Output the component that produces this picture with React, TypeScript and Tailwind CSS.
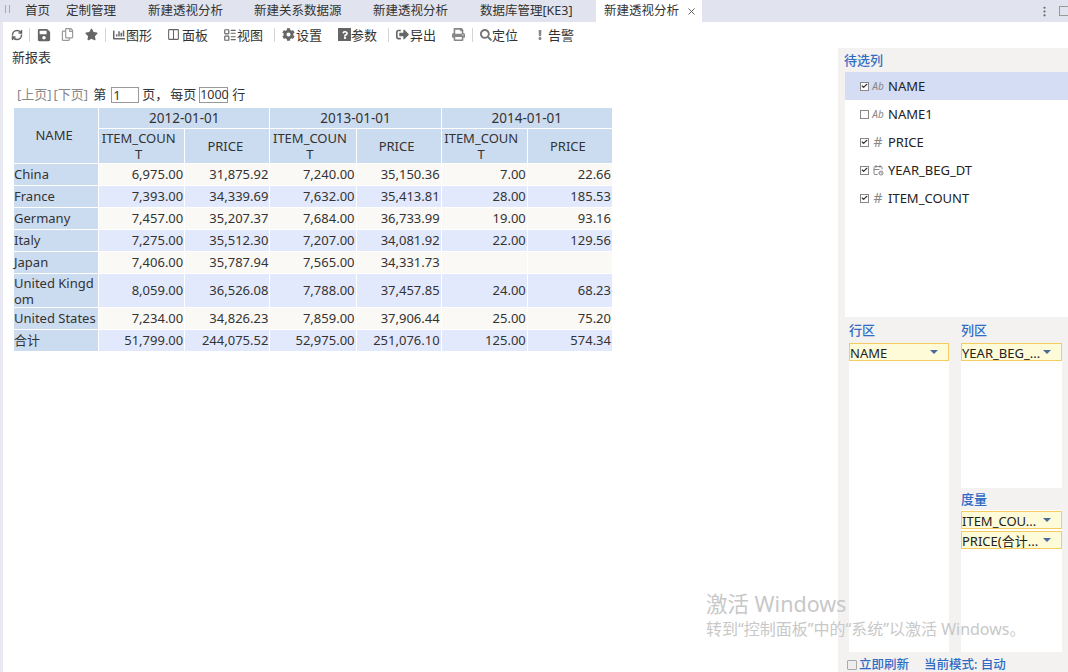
import type { FC, ReactNode } from 'react';
import { FaSave, FaStar, FaCog, FaPrint, FaSearch, FaExclamation, FaRegCopy, FaQuestion, FaChartBar, FaSignOutAlt } from 'react-icons/fa';
import { TbColumns2, TbCalendarClock } from 'react-icons/tb';
import { RefreshCw, X, Check, LayoutList, EllipsisVertical } from 'lucide-react';

const FONT = "font-['Noto_Sans','Noto_Sans_CJK_SC',sans-serif]";

const tabs = [
  { label: '首页', cls: 'ml-[25px] w-[41px]' },
  { label: '定制管理', cls: 'w-[82px]' },
  { label: '新建透视分析', cls: 'w-[106px]' },
  { label: '新建关系数据源', cls: 'w-[119px]' },
  { label: '新建透视分析', cls: 'w-[107px]' },
  { label: '数据库管理[KE3]', cls: 'w-[116px]' },
];

type Row = { name: ReactNode; vals: string[]; tall?: boolean };

const rows: Row[] = [
  { name: 'China', vals: ['6,975.00', '31,875.92', '7,240.00', '35,150.36', '7.00', '22.66'] },
  { name: 'France', vals: ['7,393.00', '34,339.69', '7,632.00', '35,413.81', '28.00', '185.53'] },
  { name: 'Germany', vals: ['7,457.00', '35,207.37', '7,684.00', '36,733.99', '19.00', '93.16'] },
  { name: 'Italy', vals: ['7,275.00', '35,512.30', '7,207.00', '34,081.92', '22.00', '129.56'] },
  { name: 'Japan', vals: ['7,406.00', '35,787.94', '7,565.00', '34,331.73', '', ''] },
  { name: <span className="block leading-[16px]">United Kingd<br />om</span>, vals: ['8,059.00', '36,526.08', '7,788.00', '37,457.85', '24.00', '68.23'], tall: true },
  { name: 'United States', vals: ['7,234.00', '34,826.23', '7,859.00', '37,906.44', '25.00', '75.20'] },
  { name: '合计', vals: ['51,799.00', '244,075.52', '52,975.00', '251,076.10', '125.00', '574.34'] },
];

const ToolItem: FC<{ icon: ReactNode; label?: string; cls?: string }> = ({ icon, label, cls }) => (
  <div className={`flex items-center shrink-0 ${cls ?? ''}`}>
    {icon}
    {label && <span className="text-[13px] leading-none text-[#333] mt-[2px]">{label}</span>}
  </div>
);

const Sep = ({ cls }: { cls: string }) => <div className={`w-px h-[14px] bg-[#d4d4d4] shrink-0 ${cls}`} />;

const FieldRow: FC<{ label: string; checked?: boolean; active?: boolean; icon: ReactNode }> = ({ label, checked = true, active, icon }) => (
  <div className={`h-[28px] flex items-center pl-[15px] ${active ? 'bg-[#d4ddf4]' : ''}`}>
    <span className="w-[9px] h-[9px] border border-[#888] bg-white flex items-center justify-center shrink-0">
      {checked && <Check size={8} strokeWidth={4} className="text-[#333]" />}
    </span>
    <span className="w-[18px] flex justify-center text-[#888] shrink-0">{icon}</span>
    <span className="ml-[1px] mt-[1px] text-[13px] text-[#222]">{label}</span>
  </div>
);

const Pill: FC<{ label: string; cls?: string }> = ({ label, cls }) => (
  <div className={`h-[18px] flex items-center justify-between bg-[#fefbd8] border border-[#f5cc5e] text-[13px] leading-none text-[#222] ${cls ?? ''}`}>
    <span className="whitespace-nowrap pt-[2px]">{label}</span>
    <span className="w-0 h-0 border-x-[4px] border-x-transparent border-t-[4px] border-t-[#4a6a9a] mr-[10px]" />
  </div>
);

const Ab = () => <span className="text-[10px] italic leading-none">Ab</span>;
const Hash = () => <span className="text-[14px] leading-none">#</span>;

const App: FC = () => {
  return (
    <div className={`relative w-[1068px] h-[672px] overflow-hidden bg-white flex flex-col ${FONT}`}>
      {/* Tabs */}
      <div className="h-[22px] bg-[#e1e3ee] flex items-center shrink-0 text-[12.5px] text-[#333]">
        <div className="absolute left-[5px] top-[5px] w-[5px] h-[8px] border-x border-[#aaa]" />
        {tabs.map((t, i) => (
          <div key={i} className={`shrink-0 leading-none whitespace-nowrap ${t.cls}`}>{t.label}</div>
        ))}
        <div className="w-[106px] h-full bg-white flex items-center pl-[8px] shrink-0 whitespace-nowrap">
          新建透视分析
          <X size={11} className="ml-[7px] text-[#555]" />
        </div>
        <EllipsisVertical size={13} className="ml-[336px] text-[#666] shrink-0" />
        <div className="ml-[8px] w-[10px] h-[10px] border border-[#999] shrink-0" />
      </div>

      {/* Toolbar */}
      <div className="h-[24px] pt-[1px] flex items-center shrink-0 border-l-[3px] border-[#e9e9f3] text-[#666]">
        <ToolItem cls="ml-[8px]" icon={<RefreshCw size={12} strokeWidth={3} />} />
        <Sep cls="ml-[6px]" />
        <ToolItem cls="ml-[7px]" icon={<FaSave size={14} />} />
        <ToolItem cls="ml-[10px]" icon={<FaRegCopy size={13} className="text-[#999]" />} />
        <ToolItem cls="ml-[11px]" icon={<FaStar size={13} />} />
        <Sep cls="ml-[7px]" />
        <ToolItem cls="ml-[7px]" icon={<FaChartBar size={12} className="mr-[1px]" />} label="图形" />
        <ToolItem cls="ml-[15px]" icon={<TbColumns2 size={13} className="mr-[2px]" />} label="面板" />
        <ToolItem cls="ml-[15px]" icon={<LayoutList size={14} />} label="视图" />
        <Sep cls="ml-[11px]" />
        <ToolItem cls="ml-[7px]" icon={<FaCog size={13} className="mr-[1px]" />} label="设置" />
        <ToolItem cls="ml-[16px]" icon={<span className="w-[13px] h-[13px] bg-[#666] flex items-center justify-center"><FaQuestion size={8} className="text-white" /></span>} label="参数" />
        <Sep cls="ml-[11px]" />
        <ToolItem cls="ml-[7px]" icon={<FaSignOutAlt size={13} className="mr-[1px]" />} label="异出" />
        <ToolItem cls="ml-[16px]" icon={<FaPrint size={13} className="text-[#888]" />} />
        <Sep cls="ml-[7px]" />
        <ToolItem cls="ml-[7px]" icon={<FaSearch size={12} className="text-[#777]" />} label="定位" />
        <ToolItem cls="ml-[17px]" icon={<FaExclamation size={10} className="mr-[3px] text-[#888]" />} label="告警" />
      </div>

      <div className="flex flex-1 min-h-0">
        {/* Report */}
        <div className="flex-1 border-l-[3px] border-[#e9e9f3] pl-[9px]">
          <div className="mt-[2px] h-[18px] text-[13px] leading-[18px] text-[#333]">新报表</div>
          <div className="mt-[20px] ml-[5px] h-[18px] flex items-center text-[13px] text-[#333] whitespace-nowrap">
            <span className="text-[#888]">[上页]</span>
            <span className="ml-[2px] text-[#888]">[下页]</span>
            <span className="ml-[5px]">第</span>
            <span className="ml-[5px] w-[28px] h-[16px] border border-[#999] pl-[1px] leading-[14px]">1</span>
            <span className="ml-[3px]">页，</span>
            <span className="ml-[2px]">每页</span>
            <span className="ml-[3px] w-[29px] h-[16px] border border-[#999] leading-[14px] text-[12.5px]">1000</span>
            <span className="ml-[4px]">行</span>
          </div>
          <table className="mt-[3px] ml-[1px] border-separate border-spacing-[1px] table-fixed w-[600px] text-[13px] leading-[17px] text-[#333]">
            <colgroup>
              <col className="w-[84px]" />
              <col className="w-[85px]" />
              <col className="w-[84px]" />
              <col className="w-[85px]" />
              <col className="w-[84px]" />
              <col className="w-[85px]" />
              <col className="w-[84px]" />
            </colgroup>
            <thead>
              <tr className="h-[20px]">
                <th rowSpan={2} className="bg-[#ccdcf0] font-normal align-middle pr-[4px]">NAME</th>
                {['2012-01-01', '2013-01-01', '2014-01-01'].map((d) => (
                  <th key={d} colSpan={2} className="bg-[#ccdcf0] font-normal text-[13.5px]">{d}</th>
                ))}
              </tr>
              <tr className="h-[34px]">
                {[0, 1, 2].map((i) => [
                  <th key={`c${i}`} className="bg-[#ccdcf0] font-normal break-all leading-[16px] pr-[6px]">ITEM_COUN T</th>,
                  <th key={`p${i}`} className="bg-[#ccdcf0] font-normal pr-[4px]">PRICE</th>,
                ])}
              </tr>
            </thead>
            <tbody>
              {rows.map((r, i) => (
                <tr key={i} className={r.tall ? 'h-[33px]' : 'h-[21px]'}>
                  <td className="bg-[#ccdcf0] p-0 whitespace-nowrap">{r.name}</td>
                  {r.vals.map((v, j) => (
                    <td key={j} className={`text-right p-0 pr-[1px] ${i % 2 ? 'bg-[#e3e9fc]' : 'bg-[#fbf9f5]'}`}>{v}</td>
                  ))}
                </tr>
              ))}
            </tbody>
          </table>
        </div>

        {/* Side panel */}
        <div className="w-[230px] mt-[2px] bg-[#f3f2f1] pl-[7px] flex flex-col shrink-0">
          <div className="h-[24px] pt-[3px] -ml-[1px] text-[13px] leading-[18px] font-medium text-[#2f6cc4]">待选列</div>
          <div className="h-[245px] bg-white">
            <FieldRow label="NAME" active icon={<Ab />} />
            <FieldRow label="NAME1" checked={false} icon={<Ab />} />
            <FieldRow label="PRICE" icon={<Hash />} />
            <FieldRow label="YEAR_BEG_DT" icon={<TbCalendarClock size={12} />} />
            <FieldRow label="ITEM_COUNT" icon={<Hash />} />
          </div>
          <div className="flex flex-1 min-h-0 ml-[4px] gap-[12px]">
            <div className="w-[100px] flex flex-col">
              <div className="h-[26px] pt-[4px] text-[13px] leading-[18px] font-medium text-[#2f6cc4]">行区</div>
              <div className="h-[309px] bg-white">
                <Pill label="NAME" />
              </div>
            </div>
            <div className="w-[101px] flex flex-col">
              <div className="h-[26px] pt-[4px] text-[13px] leading-[18px] font-medium text-[#2f6cc4]">列区</div>
              <div className="h-[145px] bg-white">
                <Pill label="YEAR_BEG_..." />
              </div>
              <div className="h-[22px] pt-[2px] text-[13px] leading-[18px] font-medium text-[#2f6cc4]">度量</div>
              <div className="h-[142px] bg-white flex flex-col gap-[2px] pt-[1px]">
                <Pill label="ITEM_COU..." />
                <Pill label="PRICE(合计..." />
              </div>
            </div>
          </div>
          <div className="h-[20px] pt-[6px] ml-[2px] flex items-center text-[12.5px] font-medium text-[#2f6cc4] whitespace-nowrap">
            <span className="w-[10px] h-[10px] border border-[#aaa] bg-[#eee] rounded-[1px] shrink-0" />
            <span className="ml-[2px]">立即刷新</span>
            <span className="ml-[15px]">当前模式: 自动</span>
          </div>
        </div>
      </div>

      {/* Windows activation watermark */}
      <div className="absolute left-[706px] top-[591px] pointer-events-none whitespace-nowrap text-[#c8c8c8]">
        <div className="text-[21.5px] leading-[26px]">激活 Windows</div>
        <div className="mt-[2px] text-[16px] leading-[20px]">转到“控制面板”中的“系统”以激活 Windows。</div>
      </div>
    </div>
  );
};

export default App;
